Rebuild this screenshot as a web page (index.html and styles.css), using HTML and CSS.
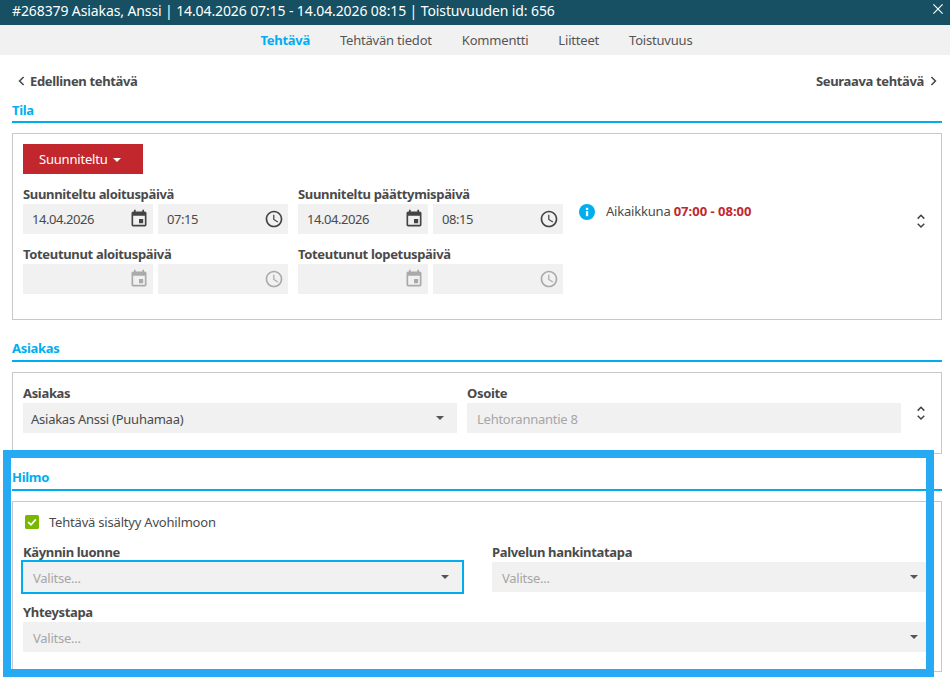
FILE: index.html
```html
<!DOCTYPE html>
<html lang="fi">
<head>
<meta charset="utf-8">
<title>Tehtävä</title>
<link rel="stylesheet" href="styles.css">
</head>
<body>
<svg class="defs" width="0" height="0" aria-hidden="true">
  <symbol id="i-cal" viewBox="0 0 24 24"><path d="M17 12h-5v5h5v-5zM16 1v2H8V1H6v2H5c-1.11 0-1.99.9-1.99 2L3 19c0 1.1.89 2 2 2h14c1.1 0 2-.9 2-2V5c0-1.1-.9-2-2-2h-1V1h-2zm3 18H5V8h14v11z"/></symbol>
  <symbol id="i-clock" viewBox="0 0 24 24"><path d="M11.99 2C6.47 2 2 6.48 2 12s4.47 10 9.99 10C17.52 22 22 17.52 22 12S17.52 2 11.99 2zM12 20c-4.42 0-8-3.58-8-8s3.58-8 8-8 8 3.58 8 8-3.58 8-8 8zm.5-13H11v6l5.25 3.15.75-1.23-4.5-2.67z"/></symbol>
  <symbol id="i-updown" viewBox="0 0 16 16"><path d="M4.7 5.6 8 2.3l3.3 3.3M4.7 10.7 8 14l3.3-3.3" fill="none" stroke="currentColor" stroke-width="1.5"/></symbol>
</svg>
<header class="titlebar">
  <span>#268379 Asiakas, Anssi | 14.04.2026 07:15 - 14.04.2026 08:15 | Toistuvuuden id: 656</span>
  <svg class="close" width="10" height="10" viewBox="0 0 10 10"><path d="M.4.4l9.2 9.2M9.6.4.4 9.6" stroke="#fff" stroke-width="1.2" fill="none"/></svg>
</header>
<nav class="tabs">
  <span class="tab active">Tehtävä</span>
  <span class="tab">Tehtävän tiedot</span>
  <span class="tab">Kommentti</span>
  <span class="tab">Liitteet</span>
  <span class="tab">Toistuvuus</span>
</nav>
<main class="content">
  <div class="pager">
    <span class="pager-link"><svg class="chev" width="7" height="10" viewBox="0 0 7 10"><path d="M5.6 1 1.6 5l4 4" fill="none" stroke="currentColor" stroke-width="1.6"/></svg>Edellinen tehtävä</span>
    <span class="pager-link">Seuraava tehtävä<svg class="chev" width="7" height="10" viewBox="0 0 7 10"><path d="M1.4 1l4 4-4 4" fill="none" stroke="currentColor" stroke-width="1.6"/></svg></span>
  </div>

  <h2 class="section-title first">Tila</h2>
  <section class="box box-tila">
    <button class="status-btn" type="button">Suunniteltu<i class="caret caret-white"></i></button>
    <div class="tila-row">
      <div class="date-grid">
        <div class="field">
          <label class="label">Suunniteltu aloituspäivä</label>
          <div class="pair">
            <div class="input"><span>14.04.2026</span><svg class="ico"><use href="#i-cal"/></svg></div>
            <div class="input"><span>07:15</span><svg class="ico"><use href="#i-clock"/></svg></div>
          </div>
        </div>
        <div class="field">
          <label class="label">Suunniteltu päättymispäivä</label>
          <div class="pair">
            <div class="input"><span>14.04.2026</span><svg class="ico"><use href="#i-cal"/></svg></div>
            <div class="input"><span>08:15</span><svg class="ico"><use href="#i-clock"/></svg></div>
          </div>
        </div>
        <div class="field">
          <label class="label">Toteutunut aloituspäivä</label>
          <div class="pair">
            <div class="input off"><span></span><svg class="ico"><use href="#i-cal"/></svg></div>
            <div class="input off"><span></span><svg class="ico"><use href="#i-clock"/></svg></div>
          </div>
        </div>
        <div class="field">
          <label class="label">Toteutunut lopetuspäivä</label>
          <div class="pair">
            <div class="input off"><span></span><svg class="ico"><use href="#i-cal"/></svg></div>
            <div class="input off"><span></span><svg class="ico"><use href="#i-clock"/></svg></div>
          </div>
        </div>
      </div>
      <div class="info">
        <svg class="info-ico" width="16" height="16" viewBox="0 0 16 16"><circle cx="8" cy="8" r="8" fill="#00aeef"/><rect x="6.9" y="7" width="2.3" height="5.2" fill="#fff"/><rect x="6.9" y="3.8" width="2.3" height="2.2" fill="#fff"/></svg>
        <span>Aikaikkuna <b class="time-window">07:00 - 08:00</b></span>
      </div>
      <svg class="updown updown-tila"><use href="#i-updown"/></svg>
    </div>
  </section>

  <h2 class="section-title">Asiakas</h2>
  <section class="box box-asiakas">
    <div class="two">
      <div class="field">
        <label class="label">Asiakas</label>
        <div class="select pad-8"><span>Asiakas Anssi (Puuhamaa)</span><i class="caret"></i></div>
      </div>
      <div class="field">
        <label class="label">Osoite</label>
        <div class="select"><span class="muted">Lehtorannantie 8</span></div>
      </div>
    </div>
    <svg class="updown updown-asiakas"><use href="#i-updown"/></svg>
  </section>

  <h2 class="section-title hilmo-title">Hilmo</h2>
  <section class="box box-hilmo">
    <div class="check-row">
      <svg class="check" width="14" height="14" viewBox="0 0 14 14"><rect width="14" height="14" rx="1.5" fill="#7ab800"/><path d="M3.2 7.2 6 9.8l4.8-5.4" fill="none" stroke="#fff" stroke-width="1.6"/></svg>
      <span>Tehtävä sisältyy Avohilmoon</span>
    </div>
    <div class="hilmo-grid">
      <div class="field">
        <label class="label">Käynnin luonne</label>
        <div class="select focus"><span class="muted">Valitse...</span><i class="caret"></i></div>
      </div>
      <div class="field">
        <label class="label">Palvelun hankintatapa</label>
        <div class="select"><span class="muted">Valitse...</span><i class="caret"></i></div>
      </div>
      <div class="field wide">
        <label class="label">Yhteystapa</label>
        <div class="select"><span class="muted">Valitse...</span><i class="caret"></i></div>
      </div>
    </div>
  </section>
</main>
<div class="highlight"></div>
</body>
</html>
```
FILE: styles.css
```css
* { box-sizing: border-box; }
html, body { margin: 0; padding: 0; }
body {
  position: relative;
  width: 950px;
  height: 685px;
  overflow: hidden;
  background: #fff;
  color: #4a4a4a;
  font-family: "Noto Sans", "Open Sans", sans-serif;
  font-size: 13px;
  letter-spacing: -0.2px;
}
.defs { position: absolute; }

.titlebar {
  height: 25px;
  background: #165062;
  color: #fff;
  display: flex;
  justify-content: space-between;
  align-items: flex-start;
  padding: 0 7px 0 12px;
  font-size: 14px;
  line-height: 22px;
  letter-spacing: -0.11px;
}
.close { margin-top: 4px; }

.tabs {
  height: 30px;
  background: #f1f1f1;
  display: flex;
  justify-content: center;
  align-items: center;
  gap: 30px;
  padding-left: 3px;
}
.tab { color: #555; line-height: 30px; }
.tab.active { color: #00aeef; font-weight: 700; letter-spacing: -0.3px; }

.content { padding: 0 8px 0 12px; }

.pager {
  height: 44px;
  padding: 15px 5px 0 6px;
  display: flex;
  justify-content: space-between;
  font-weight: 700;
  line-height: 22px;
  letter-spacing: -0.35px;
  color: #4a4a4a;
}
.pager-link { display: flex; align-items: center; gap: 5px; height: 22px; }
.pager-link:last-child { gap: 6px; }

.section-title {
  margin: 18px 0 10px;
  height: 24px;
  border-bottom: 2px solid #00aeef;
  color: #00aeef;
  font-size: 13px;
  font-weight: 700;
  line-height: 20px;
  letter-spacing: -0.3px;
}
.section-title.first { margin-top: 0; padding-top: 1px; }
.section-title.hilmo-title { margin-top: 13px; }

.box { border: 1px solid #c8c8c8; padding: 10px; }
.box-tila { height: 187px; }
.box-asiakas { height: 82px; display: flex; gap: 12px; }
.box-hilmo { height: 171px; }

.status-btn {
  display: block;
  width: 120px;
  height: 30px;
  border: 0;
  padding: 0 0 0 16px;
  background: #c1272d;
  color: #fff;
  font: inherit;
  letter-spacing: inherit;
  text-align: left;
}

.tila-row { display: flex; margin-top: 10px; }
.date-grid { display: grid; grid-template-columns: 265px 265px; gap: 10px; }
.field { min-width: 0; }
.label {
  display: block;
  height: 20px;
  line-height: 20px;
  font-weight: 700;
  color: #4a4a4a;
  letter-spacing: -0.33px;
}
.pair { display: grid; grid-template-columns: 130px 130px; gap: 5px; }

.input {
  height: 30px;
  background: #f1f1f1;
  display: flex;
  align-items: center;
  justify-content: space-between;
  padding: 0 4px 0 9px;
  letter-spacing: -0.45px;
}
.ico { width: 20px; height: 20px; fill: #444; }
.input.off .ico { fill: #aaa; }

.info {
  flex: 1;
  margin: 17px 0 0 16px;
  display: flex;
  align-items: flex-start;
  gap: 11px;
  line-height: 20px;
}
.info-ico { margin-top: 3px; }
.time-window { color: #c1272d; letter-spacing: 0; }

.updown { width: 16px; height: 16px; color: #444; flex: none; }
.updown-tila { margin: 29px 2px 0 0; }
.updown-asiakas { margin-top: 22px; }

.two { display: grid; grid-template-columns: 434px 434px; gap: 10px; }

.select {
  position: relative;
  height: 30px;
  background: #f1f1f1;
  display: flex;
  align-items: center;
  justify-content: space-between;
  padding: 2px 13px 0 10px;
  letter-spacing: -0.25px;
}
.pad-8 { padding-left: 8px; }
.select.focus { outline: 2px solid #00aeef; }
.muted { color: #a6a6a6; }

.caret {
  display: inline-block;
  width: 0;
  height: 0;
  margin-top: -3px;
  border-left: 4px solid transparent;
  border-right: 4px solid transparent;
  border-top: 4px solid #555;
}
.caret-white { border-top-color: #fff; margin: 0 0 0 5px; vertical-align: 2px; }

.check-row {
  height: 20px;
  display: flex;
  align-items: center;
  gap: 10px;
  padding-left: 2px;
}
.check { flex: none; }

.hilmo-grid {
  margin-top: 10px;
  display: grid;
  grid-template-columns: 439px 439px;
  column-gap: 30px;
  row-gap: 10px;
}
.wide { grid-column: 1 / -1; }

.highlight {
  position: absolute;
  left: 3px;
  top: 450px;
  width: 931px;
  height: 227px;
  border: 8px solid #25aaf3;
  pointer-events: none;
}
```
